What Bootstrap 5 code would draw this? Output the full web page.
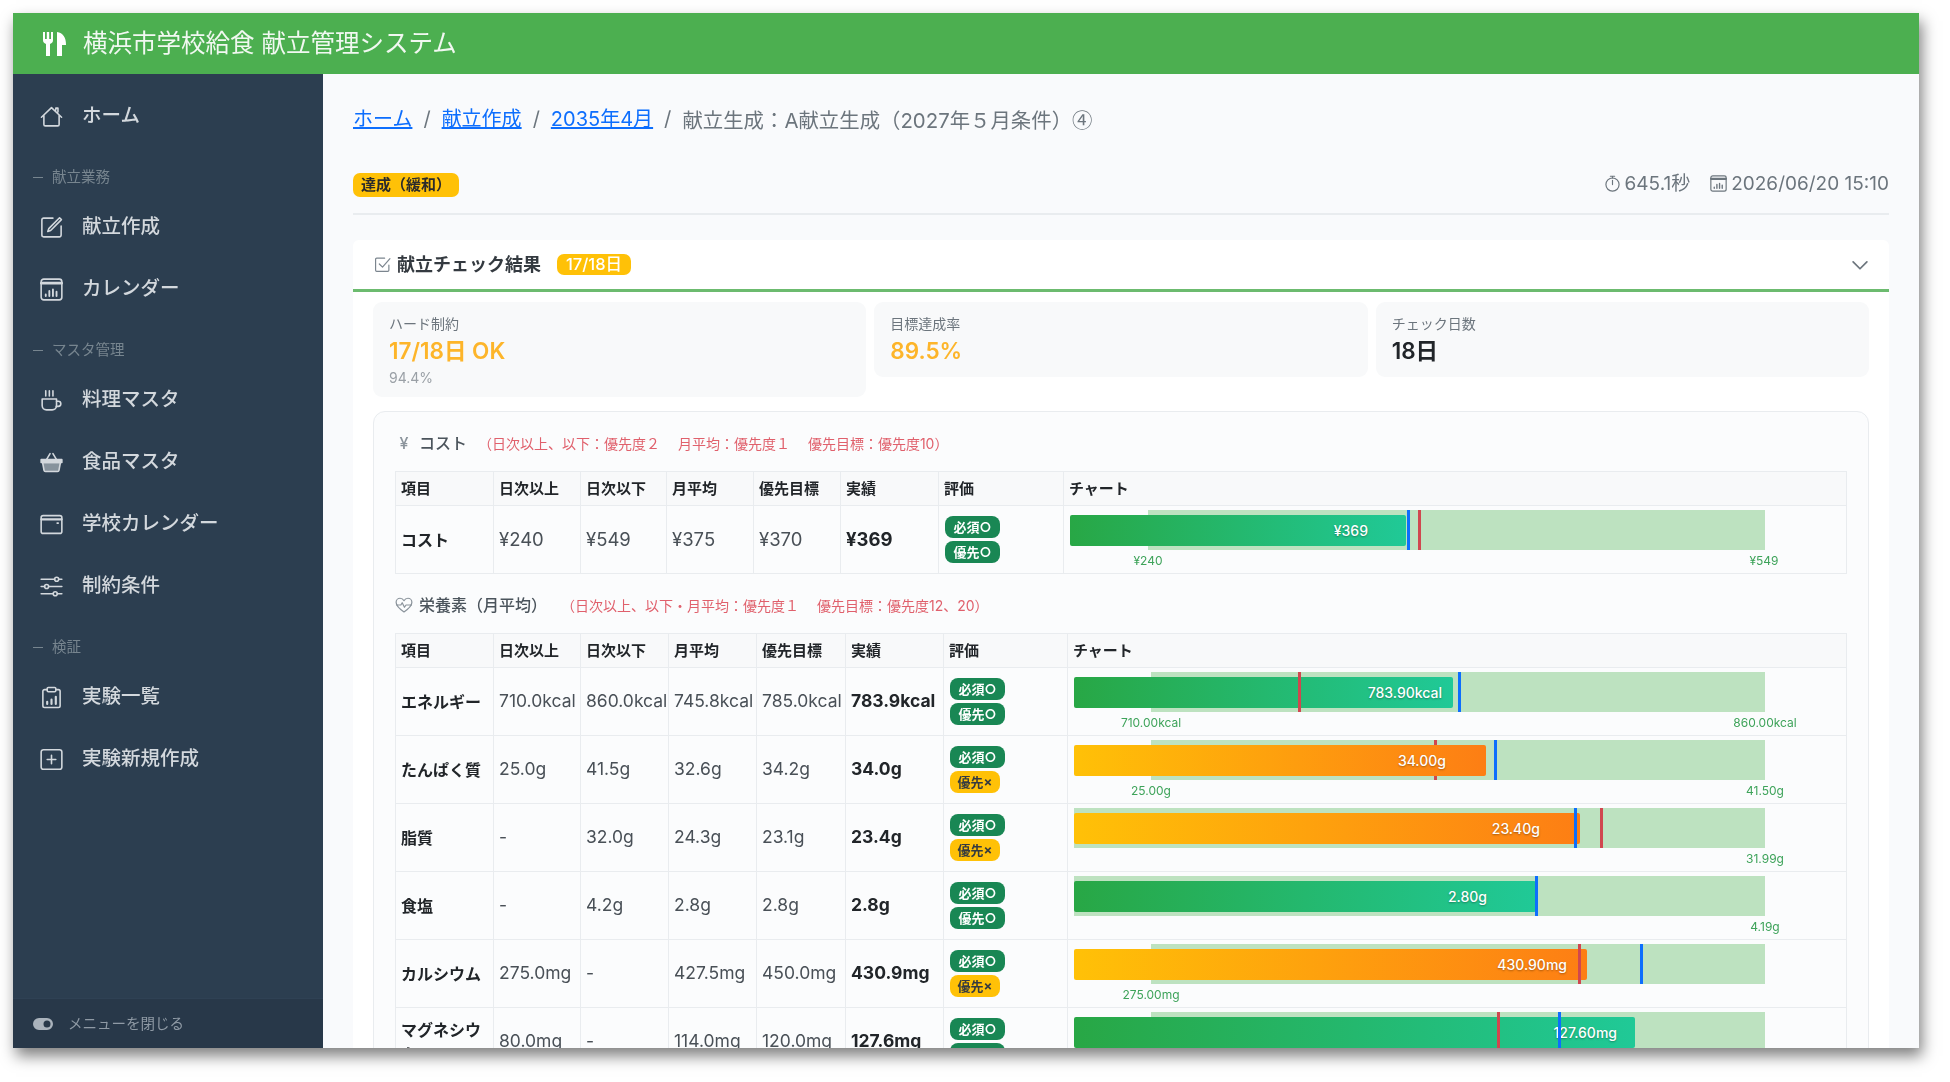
<!DOCTYPE html>
<html lang="ja">
<head>
    <meta charset="UTF-8">
    <title>横浜市学校給食 献立管理システム</title>
    <link href="https://cdn.jsdelivr.net/npm/bootstrap@5.3.0/dist/css/bootstrap.min.css" rel="stylesheet">
    <style>
        html, body { height: 100%; overflow: hidden; background: #fff; }
        body { font-family: "Inter", "Noto Sans CJK JP", sans-serif; font-size: 16px; color: #212529; }

        .app-window { margin: 13px 0 0 13px; width: 1906px; height: 1035px; overflow: hidden; box-shadow: 3px 8px 14px rgba(0,0,0,.5); filter: blur(.5px); }
        .app-head { height: 61px; background: #4caf50; color: #f1f8f1; font-size: 24.5px; padding-left: 30px; gap: 16px; }
        .app-head svg { width: 24px; height: 24px; fill: #fff; }
        .app-body { height: 974px; }

        .side-bar { width: 310px; background: #2c3e50; padding-top: 11px; }
        .side-bar .nav-link { height: 62px; padding: 0 0 0 27px; gap: 19px; color: #d3d8dd; font-size: 19.5px; font-weight: 500; }
        .side-bar .nav-link svg { width: 23px; height: 23px; }
        .side-sec { height: 49px; padding: 0 0 8px 20px; gap: 9px; color: #77858f; font-size: 14.5px; }
        .side-sec::before { content: ""; width: 10px; height: 1px; background: #77858f; margin-bottom: 10px; }
        .side-foot { height: 50px; background: #283849; border-top: 1px solid #2f4154; padding-left: 20px; gap: 15px; color: #8f9aa5; font-size: 14.5px; }
        .side-foot svg { width: 20px; height: 20px; fill: #aab3bc; }
        .ico { fill: none; stroke: currentColor; stroke-width: 1.1; stroke-linecap: round; stroke-linejoin: round; flex-shrink: 0; }

        .main-pane { background: #f9fafc; padding: 31px 30px 30px; min-width: 0; }
        .crumbs { font-size: 20px; line-height: 28px; margin-bottom: 35px; --bs-breadcrumb-divider-color: #6c757d; --bs-breadcrumb-item-padding-x: 11px; }
        .crumbs .breadcrumb-item.active { color: #6c757d; font-size: 20.4px; }
        .crumb-num { font-family: "Noto Sans CJK JP", sans-serif; }
        .meta-row { height: 30px; }
        .status-pill { background: #ffc107; color: #2b2b2b; font-size: 15px; font-weight: 700; border-radius: 7px; padding: 2px 8px; height: 24px; line-height: 20px; }
        .meta-info { color: #6c757d; font-size: 19px; gap: 20px; margin-top: -2px; }
        .meta-info svg { width: 17px; height: 17px; margin-right: 4px; vertical-align: -2px; }
        .meta-line { border-top: 2px solid #e9ecef; margin: 13px 0 25px; }

        .check-card { background: #fff; border-radius: 6px 6px 0 0; }
        .check-head { height: 52px; border-bottom: 3px solid #6cbb6f; padding: 0 20px 0 21px; font-size: 18px; font-weight: 600; color: #343a40; }
        .check-head > svg:first-child { width: 17px; height: 17px; color: #7b858e; margin-right: 6px; }
        .check-count { background: #ffc107; color: #fff; font-size: 16.5px; font-weight: 500; border-radius: 7px; padding: 0 9px; height: 21px; line-height: 21px; margin-left: 16px; }
        .check-chev { width: 20px; height: 20px; color: #6c757d; margin-right: -1px; }
        .check-body { padding: 10px 20px 0; }

        .stat-box { flex: 1 1 0; background: #f8f9fa; border-radius: 9px; padding: 12px 16px 9px; }
        .stat-name { font-size: 14px; line-height: 20px; color: #6c757d; }
        .stat-num { font-size: 22.5px; font-weight: 600; line-height: 34px; color: #212529; }
        .stat-warn { color: #fdb52a; }
        .stat-sub { font-size: 14px; line-height: 20px; color: #9aa0a6; }

        .inner-panel { margin-top: 14px; border: 1px solid #e9ecef; border-radius: 12px; background: #fbfcfd; padding: 16px 20px 0 21px; }
        .sec-title { height: 30px; margin-bottom: 13px; font-size: 16px; font-weight: 500; color: #4b545c; }
        .sec-title svg, .sec-yen { width: 18px; color: #8b949c; margin-right: 6px; flex-shrink: 0; }
        .sec-note { font-size: 14px; color: #e0606c; margin-left: 14px; font-weight: 400; white-space: pre; }
        .sec-note-near { margin-left: 11px; }

        .chk-table { table-layout: fixed; width: 1452px; margin: 0 0 16px 0; --bs-table-border-color: #e9ecef; font-size: 17.5px; }
        .chk-table > * > tr > * { padding: 0 5px; vertical-align: middle; white-space: nowrap; color: #495057; }
        .chk-table th { height: 34px; padding-top: 2px !important; background: #f8f9fa; font-size: 15px; font-weight: 700; color: #212529 !important; }
        .chk-table td { height: 67px; }
        .chk-table td.row-name { font-size: 16px; font-weight: 700; color: #212529; white-space: normal; line-height: 24px; padding-right: 2px; }
        .chk-table td.row-val { font-weight: 700; color: #212529; }
        .chk-table td.row-eval { padding-left: 6px; }
        .chk-table td.row-chart { padding: 4px 6px 5px; vertical-align: top; }
        .cost-cols { font-size: 18.5px; }
        .cost-cols th:nth-child(1) { width: 98px; } .cost-cols th:nth-child(2) { width: 87px; }
        .cost-cols th:nth-child(3) { width: 86px; } .cost-cols th:nth-child(4) { width: 87px; }
        .cost-cols th:nth-child(5) { width: 87px; } .cost-cols th:nth-child(6) { width: 98px; }
        .cost-cols th:nth-child(7) { width: 125px; }
        .nutr-cols th:nth-child(1) { width: 98px; } .nutr-cols th:nth-child(2) { width: 87px; }
        .nutr-cols th:nth-child(3) { width: 88px; } .nutr-cols th:nth-child(4) { width: 88px; }
        .nutr-cols th:nth-child(5) { width: 89px; } .nutr-cols th:nth-child(6) { width: 98px; }
        .nutr-cols th:nth-child(7) { width: 124px; }

        .eval-pill { display: block; width: 55px; height: 22px; line-height: 22px; border-radius: 8px; font-size: 13px; font-weight: 700; text-align: center; }
        .eval-pill + .eval-pill { margin-top: 3px; }
        .eval-ok { background: #198754; color: #fff; }
        .eval-warn { background: #ffc107; color: #343a40; width: 50px; }

        .chart-box { position: relative; height: 58px; }
        .chart-track { position: absolute; top: 0; height: 40px; background: #bde2c0; }
        .chart-bar { position: absolute; left: 0; top: 5px; height: 31px; border-radius: 2px; }
        .chart-bar span { position: absolute; top: 0; line-height: 31px; color: #fff; font-size: 14px; font-weight: 500; text-shadow: 0 1px 2px rgba(0,0,0,.35); white-space: nowrap; }
        .bar-ok { background: linear-gradient(90deg, #28a745, #20c997); }
        .bar-warn { background: linear-gradient(90deg, #ffc107, #fd7e14); }
        .chart-mark { position: absolute; top: 0; width: 3px; height: 40px; }
        .mark-blue { background: #0d6efd; }
        .mark-red { background: #d0474f; }
        .chart-lbl { position: absolute; top: 43px; transform: translateX(-50%); color: #3ea35a; font-size: 12px; line-height: 16px; white-space: nowrap; }
    </style>
</head>
<body>
    <svg width="0" height="0" class="position-absolute">
        <defs>
            <symbol id="i-home" viewBox="0 0 16 16"><path d="M1 8.500 8 1.800l7 6.700M2.700 7v6.500a1 1 0 0 0 1 1h8.600a1 1 0 0 0 1-1V7M11 3.500V2.200h1.500v2.700"/></symbol>
            <symbol id="i-edit" viewBox="0 0 16 16"><path d="M9 1.500H2.500a1.200 1.200 0 0 0-1.200 1.200v10.600a1.200 1.200 0 0 0 1.200 1.200h11a1.200 1.200 0 0 0 1.200-1.200V7"/><path d="M13.600 1.200l1.300 1.300-7.500 7.600-2 .7.700-2z"/></symbol>
            <symbol id="i-cal3" viewBox="0 0 16 16"><rect x=".8" y=".8" width="14.400" height="14.400" rx="1.800"/><path d="M1 3.600h14" stroke-width="2"/><path d="M4 11.500v1M6.500 9v3.500M9 8v4.500M11.500 9.500v3" stroke-width="1.300"/></symbol>
            <symbol id="i-cup" viewBox="0 0 16 16"><path d="M1.500 7h10v4.500a3 3 0 0 1-3 3h-4a3 3 0 0 1-3-3z"/><path d="M11.500 8.500h1.200a1.600 1.600 0 0 1 0 3.600h-1.400M4 1.200v3.600M6.500 1.200v3.600M9 1.200v3.600"/></symbol>
            <symbol id="i-basket" viewBox="0 0 16 16"><path d="M4.500 6 7 1.800M11.500 6 9 1.800"/><path d="M.8 6h14.400v2H.8z" fill="currentColor"/><path d="M1.800 8l1 5.500a1 1 0 0 0 1 .8h8.400a1 1 0 0 0 1-.8l1-5.500z" fill="currentColor" fill-opacity=".55"/></symbol>
            <symbol id="i-cal" viewBox="0 0 16 16"><rect x=".8" y="1.800" width="14.400" height="12.400" rx="1.400"/><path d="M1 4.400h14" stroke-width="1.600"/><path d="M12 7h.6" stroke-width="1.300"/></symbol>
            <symbol id="i-sliders" viewBox="0 0 16 16"><path d="M.8 3h9.400M13 3h2.200M.8 8h2.400M6 8h9.200M.8 13h8.400M12 13h3.200"/><circle cx="11.600" cy="3" r="1.400"/><circle cx="4.600" cy="8" r="1.400"/><circle cx="10.600" cy="13" r="1.400"/></symbol>
            <symbol id="i-clip" viewBox="0 0 16 16"><path d="M5 2.500H3.200a1.200 1.200 0 0 0-1.200 1.200v10a1.200 1.200 0 0 0 1.200 1.200h9.600a1.200 1.200 0 0 0 1.200-1.200v-10a1.200 1.200 0 0 0-1.200-1.200H11"/><rect x="5" y="1" width="6" height="3" rx=".8"/><path d="M5 12.500v-1.500M8 12.500V9.500M11 12.500V7.500" stroke-width="1.500"/></symbol>
            <symbol id="i-plus" viewBox="0 0 16 16"><rect x=".8" y="1.200" width="14.400" height="13.600" rx="1.600"/><path d="M8 5v6M5 8h6"/></symbol>
            <symbol id="i-check" viewBox="0 0 16 16"><path d="M14 8.500v5a1 1 0 0 1-1 1H2.500a1 1 0 0 1-1-1V3a1 1 0 0 1 1-1H10"/><path d="M5 7.500l3 3 7-8"/></symbol>
            <symbol id="i-chev" viewBox="0 0 16 16"><path d="M2.500 5.500 8 11l5.500-5.500" stroke-width="1.400"/></symbol>
            <symbol id="i-timer" viewBox="0 0 16 16"><circle cx="8" cy="9" r="6.200"/><path d="M8 9V5M6 1.200h4M8 1.200v1.600"/></symbol>
            <symbol id="i-heart" viewBox="0 0 16 16"><path d="M8 14.200C3 10.800 1 8.400 1 5.600 1 3.400 2.700 2 4.500 2 6 2 7.200 2.800 8 4.200 8.800 2.800 10 2 11.500 2 13.300 2 15 3.400 15 5.600c0 2.800-2 5.200-7 8.600z"/><path d="M1.600 8h3.600l1.200-2 2 4 1.400-2h4.800"/></symbol>
        </defs>
    </svg>

    <div class="app-window d-flex flex-column">
        <header class="app-head d-flex align-items-center">
            <svg viewBox="0 0 24 24"><path d="M0 0h2v7h1.800V0h2.400v7H8V0h2v8a4 4 0 0 1-3 3.900V24H3V11.900A4 4 0 0 1 0 8z"/><path d="M14 0c6 1 9 5 9 13h-4v11h-5z"/></svg>
            <span>横浜市学校給食 献立管理システム</span>
        </header>

        <div class="app-body d-flex">
            <!-- Sidebar -->
            <aside class="side-bar d-flex flex-column flex-shrink-0">
                <nav class="nav flex-column flex-nowrap flex-grow-1">
                    <a class="nav-link d-flex align-items-center" href="#"><svg class="ico"><use href="#i-home"/></svg>ホーム</a>
                    <div class="side-sec d-flex align-items-end">献立業務</div>
                    <a class="nav-link d-flex align-items-center" href="#"><svg class="ico"><use href="#i-edit"/></svg>献立作成</a>
                    <a class="nav-link d-flex align-items-center" href="#"><svg class="ico"><use href="#i-cal3"/></svg>カレンダー</a>
                    <div class="side-sec d-flex align-items-end">マスタ管理</div>
                    <a class="nav-link d-flex align-items-center" href="#"><svg class="ico"><use href="#i-cup"/></svg>料理マスタ</a>
                    <a class="nav-link d-flex align-items-center" href="#"><svg class="ico"><use href="#i-basket"/></svg>食品マスタ</a>
                    <a class="nav-link d-flex align-items-center" href="#"><svg class="ico"><use href="#i-cal"/></svg>学校カレンダー</a>
                    <a class="nav-link d-flex align-items-center" href="#"><svg class="ico"><use href="#i-sliders"/></svg>制約条件</a>
                    <div class="side-sec d-flex align-items-end">検証</div>
                    <a class="nav-link d-flex align-items-center" href="#"><svg class="ico"><use href="#i-clip"/></svg>実験一覧</a>
                    <a class="nav-link d-flex align-items-center" href="#"><svg class="ico"><use href="#i-plus"/></svg>実験新規作成</a>
                </nav>
                <div class="side-foot d-flex align-items-center">
                    <svg viewBox="0 0 20 20"><path fill-rule="evenodd" d="M6 4h8a6 6 0 0 1 0 12H6A6 6 0 0 1 6 4zm8 2.500a3.500 3.500 0 1 0 0 7 3.500 3.500 0 0 0 0-7z"/></svg>
                    <span>メニューを閉じる</span>
                </div>
            </aside>

            <!-- Main -->
            <main class="main-pane flex-grow-1">
                <ol class="breadcrumb crumbs">
                    <li class="breadcrumb-item"><a href="#">ホーム</a></li>
                    <li class="breadcrumb-item"><a href="#">献立作成</a></li>
                    <li class="breadcrumb-item"><a href="#">2035年4月</a></li>
                    <li class="breadcrumb-item active">献立生成：A献立生成（2027年５月条件）<span class="crumb-num">④</span></li>
                </ol>

                <div class="meta-row d-flex justify-content-between align-items-center">
                    <span class="status-pill">達成（緩和）</span>
                    <div class="meta-info d-flex">
                        <span><svg class="ico"><use href="#i-timer"/></svg>645.1秒</span>
                        <span><svg class="ico"><use href="#i-cal3"/></svg>2026/06/20 15:10</span>
                    </div>
                </div>
                <div class="meta-line"></div>

                <section class="check-card">
                    <div class="check-head d-flex align-items-center">
                        <svg class="ico"><use href="#i-check"/></svg>
                        <span>献立チェック結果</span>
                        <span class="check-count">17/18日</span>
                        <svg class="ico check-chev ms-auto"><use href="#i-chev"/></svg>
                    </div>

                    <div class="check-body">
                        <div class="d-flex align-items-start gap-2">
                            <div class="stat-box">
                                <div class="stat-name">ハード制約</div>
                                <div class="stat-num stat-warn">17/18日 OK</div>
                                <div class="stat-sub">94.4%</div>
                            </div>
                            <div class="stat-box">
                                <div class="stat-name">目標達成率</div>
                                <div class="stat-num stat-warn">89.5%</div>
                            </div>
                            <div class="stat-box">
                                <div class="stat-name">チェック日数</div>
                                <div class="stat-num">18日</div>
                            </div>
                        </div>

                        <div class="inner-panel">
                            <div class="sec-title d-flex align-items-center">
                                <span class="sec-yen text-center">¥</span><span>コスト</span>
                                <span class="sec-note sec-note-near">（日次以上、以下：優先度２　 月平均：優先度１　 優先目標：優先度10）</span>
                            </div>
                            <table class="table table-bordered chk-table cost-cols">
                                <thead>
                                    <tr><th>項目</th><th>日次以上</th><th>日次以下</th><th>月平均</th><th>優先目標</th><th>実績</th><th>評価</th><th>チャート</th></tr>
                                </thead>
                                <tbody>
                                    <tr>
                                        <td class="row-name">コスト</td><td>¥240</td><td>¥549</td><td>¥375</td><td>¥370</td><td class="row-val">¥369</td>
                                        <td class="row-eval"><span class="eval-pill eval-ok">必須○</span><span class="eval-pill eval-ok">優先○</span></td>
                                        <td class="row-chart"><div class="chart-box">
                                            <div class="chart-track" style="left:78px;width:617px"></div>
                                            <div class="chart-bar bar-ok" style="width:336px"><span style="right:38px">¥369</span></div>
                                            <i class="chart-mark mark-blue" style="left:337px"></i><i class="chart-mark mark-red" style="left:348px"></i>
                                            <span class="chart-lbl" style="left:78px">¥240</span><span class="chart-lbl" style="left:694px">¥549</span>
                                        </div></td>
                                    </tr>
                                </tbody>
                            </table>

                            <div class="sec-title d-flex align-items-center">
                                <svg class="ico" height="18"><use href="#i-heart"/></svg><span>栄養素（月平均）</span>
                                <span class="sec-note">（日次以上、以下・月平均：優先度１　 優先目標：優先度12、20）</span>
                            </div>
                            <table class="table table-bordered chk-table nutr-cols">
                                <thead>
                                    <tr><th>項目</th><th>日次以上</th><th>日次以下</th><th>月平均</th><th>優先目標</th><th>実績</th><th>評価</th><th>チャート</th></tr>
                                </thead>
                                <tbody>
                                    <tr>
                                        <td class="row-name">エネルギー</td><td>710.0kcal</td><td>860.0kcal</td><td>745.8kcal</td><td>785.0kcal</td><td class="row-val">783.9kcal</td>
                                        <td class="row-eval"><span class="eval-pill eval-ok">必須○</span><span class="eval-pill eval-ok">優先○</span></td>
                                        <td class="row-chart"><div class="chart-box">
                                            <div class="chart-track" style="left:77px;width:614px"></div>
                                            <div class="chart-bar bar-ok" style="width:379px"><span style="right:11px">783.90kcal</span></div>
                                            <i class="chart-mark mark-red" style="left:224px"></i><i class="chart-mark mark-blue" style="left:384px"></i>
                                            <span class="chart-lbl" style="left:77px">710.00kcal</span><span class="chart-lbl" style="left:691px">860.00kcal</span>
                                        </div></td>
                                    </tr>
                                    <tr>
                                        <td class="row-name">たんぱく質</td><td>25.0g</td><td>41.5g</td><td>32.6g</td><td>34.2g</td><td class="row-val">34.0g</td>
                                        <td class="row-eval"><span class="eval-pill eval-ok">必須○</span><span class="eval-pill eval-warn">優先×</span></td>
                                        <td class="row-chart"><div class="chart-box">
                                            <div class="chart-track" style="left:77px;width:614px"></div>
                                            <i class="chart-mark mark-red" style="left:360px"></i>
                                            <div class="chart-bar bar-warn" style="width:412px"><span style="right:40px">34.00g</span></div>
                                            <i class="chart-mark mark-blue" style="left:420px"></i>
                                            <span class="chart-lbl" style="left:77px">25.00g</span><span class="chart-lbl" style="left:691px">41.50g</span>
                                        </div></td>
                                    </tr>
                                    <tr>
                                        <td class="row-name">脂質</td><td>-</td><td>32.0g</td><td>24.3g</td><td>23.1g</td><td class="row-val">23.4g</td>
                                        <td class="row-eval"><span class="eval-pill eval-ok">必須○</span><span class="eval-pill eval-warn">優先×</span></td>
                                        <td class="row-chart"><div class="chart-box">
                                            <div class="chart-track" style="left:0;width:691px"></div>
                                            <div class="chart-bar bar-warn" style="width:506px"><span style="right:40px">23.40g</span></div>
                                            <i class="chart-mark mark-blue" style="left:500px"></i><i class="chart-mark mark-red" style="left:526px"></i>
                                            <span class="chart-lbl" style="left:691px">31.99g</span>
                                        </div></td>
                                    </tr>
                                    <tr>
                                        <td class="row-name">食塩</td><td>-</td><td>4.2g</td><td>2.8g</td><td>2.8g</td><td class="row-val">2.8g</td>
                                        <td class="row-eval"><span class="eval-pill eval-ok">必須○</span><span class="eval-pill eval-ok">優先○</span></td>
                                        <td class="row-chart"><div class="chart-box">
                                            <div class="chart-track" style="left:0;width:691px"></div>
                                            <div class="chart-bar bar-ok" style="width:462px"><span style="right:49px">2.80g</span></div>
                                            <i class="chart-mark mark-blue" style="left:461px"></i>
                                            <span class="chart-lbl" style="left:691px">4.19g</span>
                                        </div></td>
                                    </tr>
                                    <tr>
                                        <td class="row-name">カルシウム</td><td>275.0mg</td><td>-</td><td>427.5mg</td><td>450.0mg</td><td class="row-val">430.9mg</td>
                                        <td class="row-eval"><span class="eval-pill eval-ok">必須○</span><span class="eval-pill eval-warn">優先×</span></td>
                                        <td class="row-chart"><div class="chart-box">
                                            <div class="chart-track" style="left:77px;width:614px"></div>
                                            <div class="chart-bar bar-warn" style="width:513px"><span style="right:20px">430.90mg</span></div>
                                            <i class="chart-mark mark-red" style="left:504px"></i><i class="chart-mark mark-blue" style="left:566px"></i>
                                            <span class="chart-lbl" style="left:77px">275.00mg</span>
                                        </div></td>
                                    </tr>
                                    <tr>
                                        <td class="row-name">マグネシウム</td><td>80.0mg</td><td>-</td><td>114.0mg</td><td>120.0mg</td><td class="row-val">127.6mg</td>
                                        <td class="row-eval"><span class="eval-pill eval-ok">必須○</span><span class="eval-pill eval-ok">優先○</span></td>
                                        <td class="row-chart"><div class="chart-box">
                                            <div class="chart-track" style="left:77px;width:614px"></div>
                                            <div class="chart-bar bar-ok" style="width:561px"><span style="right:18px">127.60mg</span></div>
                                            <i class="chart-mark mark-red" style="left:423px"></i><i class="chart-mark mark-blue" style="left:484px"></i>
                                        </div></td>
                                    </tr>
                                </tbody>
                            </table>
                        </div>
                    </div>
                </section>
            </main>
        </div>
    </div>

    <script src="https://cdn.jsdelivr.net/npm/bootstrap@5.3.0/dist/js/bootstrap.bundle.min.js"></script>
</body>
</html>
